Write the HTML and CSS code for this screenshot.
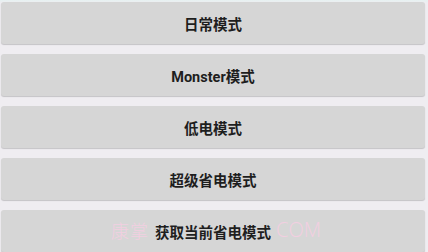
FILE: index.html
```html
<!DOCTYPE html>
<html lang="zh">
<head>
<meta charset="utf-8">
<link rel="stylesheet" href="styles.css">
</head>
<body>
<div class="list">
  <div class="btn">日常模式</div>
  <div class="btn">Monster模式</div>
  <div class="btn">低电模式</div>
  <div class="btn">超级省电模式</div>
  <div class="btn">获取当前省电模式</div>
</div>
<div class="wm wm-left">康掌</div>
<div class="wm wm-right">COM</div>
</body>
</html>
```
FILE: styles.css
```css
html, body {
  margin: 0;
  padding: 0;
  width: 428px;
  height: 252px;
  overflow: hidden;
  background: #efedf1;
  font-family: Roboto, "Noto Sans CJK SC", sans-serif;
}
body {
  position: relative;
  background: linear-gradient(#e6f1f1 0, #efedf1 3px);
}
.list {
  display: flex;
  flex-direction: column;
  gap: 10px;
  padding: 2px 3px 0 1px;
}
.btn {
  height: 42px;
  flex: none;
  display: flex;
  align-items: center;
  justify-content: center;
  background: #d6d6d6;
  border-radius: 3px;
  box-shadow: 0 1px 1px rgba(0, 0, 0, 0.18);
  color: #1e1e1e;
  font-size: 14.5px;
  font-weight: bold;
}
.wm {
  position: absolute;
  top: 218px;
  color: #f2cfe1;
  font-size: 18px;
  font-family: "Noto Sans CJK SC", sans-serif;
  font-weight: 300;
  line-height: 24px;
}
.wm-left { left: 111px; letter-spacing: 1px; }
.wm-right { left: 276px; font-family: "Open Sans", sans-serif; font-size: 20px; font-weight: 300; }
```
